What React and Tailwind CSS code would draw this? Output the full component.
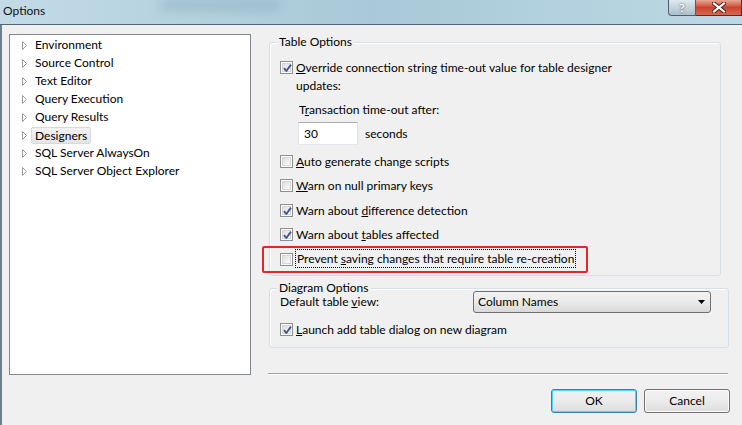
import React from "react";

function Check({ checked }) {
  return (
    <span className="relative w-[13px] h-[13px] shrink-0 border border-[#8e8f8f] bg-white flex items-center justify-center">
      <span className="w-[9px] h-[9px] border border-[#d6d6d6] bg-gradient-to-br from-[#dedede] to-[#fbfbfb]" />
      {checked && (
        <svg className="absolute left-[1px] top-[1px]" width="11" height="11" viewBox="0 0 11 11">
          <path d="M2 5.2 L4.3 8 L9 1.6" fill="none" stroke="#3e5495" strokeWidth="1.9" strokeLinejoin="round" />
        </svg>
      )}
    </span>
  );
}

function Arrow() {
  return (
    <svg width="6" height="9" viewBox="0 0 6 9" className="shrink-0">
      <path d="M0.5 0.5 L4.5 4.5 L0.5 8.5 Z" fill="#ffffff" stroke="#9a9a9a" strokeWidth="1" />
    </svg>
  );
}

function CheckRow({ checked, children, className = "" }) {
  return (
    <div className={"flex items-start h-[18px] " + className}>
      <span className="mt-[2px]">
        <Check checked={checked} />
      </span>
      <span className="ml-[3px] leading-[18px]">{children}</span>
    </div>
  );
}

const treeItems = [
  "Environment",
  "Source Control",
  "Text Editor",
  "Query Execution",
  "Query Results",
  "Designers",
  "SQL Server AlwaysOn",
  "SQL Server Object Explorer",
];

export default function App() {
  return (
    <div
      className="w-[742px] h-[425px] bg-[#f0f0f0] flex flex-col overflow-hidden text-[12px] text-black"
      style={{ fontFamily: "Lato, 'Noto Sans', sans-serif" }}
    >
      {/* Title bar */}
      <div className="relative h-[25px] shrink-0 border-b border-[#53667a] bg-gradient-to-r from-[#c2dbe7] via-[#a9c9d8] to-[#bcd8e4] flex items-start">
        <div className="absolute left-[160px] top-0 w-[120px] h-[10px] bg-[#8fb0c2] blur-[6px] opacity-70" />
        <span className="relative pl-[3px] pt-[3px] text-[12px] leading-[16px] text-[#111]">Options</span>
        <div className="ml-auto flex h-[16px]">
          <div className="w-[28px] h-[16px] border border-t-0 border-[#4d5e6e] rounded-bl-[4px] bg-gradient-to-b from-[#dfe9ef] to-[#a9bfcc] flex items-center justify-center text-white font-bold text-[12px] leading-none [text-shadow:0_0_2px_#333]">
            ?
          </div>
          <div className="w-[46px] h-[16px] border border-t-0 border-l-0 border-[#5a2a22] bg-gradient-to-b from-[#e8a595] via-[#c9452e] to-[#d8684f] flex items-center justify-center">
            <svg width="14" height="11" viewBox="0 0 14 11">
              <path d="M2 1.5 L12 9.5 M12 1.5 L2 9.5" stroke="#4a1a12" strokeWidth="4" strokeLinecap="square" />
              <path d="M2 1.5 L12 9.5 M12 1.5 L2 9.5" stroke="#ffffff" strokeWidth="2.2" strokeLinecap="square" />
            </svg>
          </div>
        </div>
      </div>

      {/* Body */}
      <div className="flex flex-1 border-l-2 border-[#6c7f8e]">
        {/* Tree */}
        <div className="ml-[7px] mt-[9px] w-[242px] h-[341px] border border-[#828790] bg-white pt-[1px]">
          {treeItems.map((t) => (
            <div key={t} className="flex items-center h-[18px] pl-[12px]">
              <Arrow />
              {t === "Designers" ? (
                <span className="ml-[3px] px-[3px] h-[17px] leading-[15px] border border-[#d9d9d9] rounded-[2px] bg-gradient-to-b from-[#f2f2f2] to-[#e5e5e5]">
                  {t}
                </span>
              ) : (
                <span className="ml-[7px] leading-[18px]">{t}</span>
              )}
            </div>
          ))}
        </div>

        {/* Right column */}
        <div className="ml-[17px] pt-[17px] flex flex-col">
          {/* Table Options */}
          <div className="relative ml-[1px] w-[452px] h-[234px] border border-[#d5dfe5] rounded-[3px] shadow-[inset_1px_1px_0_#ffffff] pl-[10px]">
            <span className="absolute left-[7px] top-[-9px] px-[2px] bg-[#f0f0f0] leading-[16px]">Table Options</span>
            <div className="flex items-start mt-[16px]">
              <span className="mt-[2px]">
                <Check checked />
              </span>
              <span className="ml-[3px] leading-[18px] w-[330px]">
                <u>O</u>verride connection string time-out value for table designer updates:
              </span>
            </div>
            <div className="ml-[19px] mt-[6px] leading-[18px]">
              T<u>r</u>ansaction time-out after:
            </div>
            <div className="ml-[18px] mt-[3px] flex items-center">
              <div className="w-[60px] h-[23px] border border-[#abadb3] border-l-[#e2e3ea] border-r-[#dbdfe6] border-b-[#e3e9ef] bg-white pl-[5px] leading-[21px]">
                30
              </div>
              <span className="ml-[7px]">seconds</span>
            </div>
            <CheckRow className="mt-[8px]">
              <u>A</u>uto generate change scripts
            </CheckRow>
            <CheckRow className="mt-[6px]">
              <u>W</u>arn on null primary keys
            </CheckRow>
            <CheckRow checked className="mt-[7px]">
              Warn about <u>d</u>ifference detection
            </CheckRow>
            <CheckRow checked className="mt-[6px]">
              Warn about <u>t</u>ables affected
            </CheckRow>
            <div className="relative flex items-start h-[18px] mt-[7px]">
              <div className="absolute left-[-18px] top-[-5px] w-[326px] h-[27px] border-2 border-[#e3262a] rounded-[2px]" />
              <span className="mt-[2px]">
                <Check />
              </span>
              <span className="ml-[2px] -mt-[2px] h-[19px] px-[1px] leading-[17px] border border-dotted border-black">
                Prevent <u>s</u>aving changes that require table re-creation
              </span>
            </div>
          </div>

          {/* Diagram Options */}
          <div className="relative ml-[1px] mt-[12px] w-[460px] h-[60px] border border-[#d5dfe5] rounded-[3px] shadow-[inset_1px_1px_0_#ffffff] pl-[10px]">
            <span className="absolute left-[7px] top-[-9px] px-[2px] bg-[#f0f0f0] leading-[16px]">Diagram Options</span>
            <div className="flex items-center mt-[2px] h-[22px]">
              <span className="leading-[18px]">
                Default table <u>v</u>iew:
              </span>
              <div className="ml-auto mr-[17px] w-[238px] h-[22px] border border-[#707070] rounded-[3px] bg-gradient-to-b from-[#f2f2f2] via-[#ebebeb] to-[#d9d9d9] flex items-center pl-[4px] pr-[5px]">
                <span>Column Names</span>
                <svg className="ml-auto" width="7" height="4" viewBox="0 0 7 4">
                  <path d="M0 0 L7 0 L3.5 4 Z" fill="#000" />
                </svg>
              </div>
            </div>
            <CheckRow checked className="mt-[8px]">
              <u>L</u>aunch add table dialog on new diagram
            </CheckRow>
          </div>

          {/* Separator */}
          <div className="mt-[25px] w-[460px] border-t border-[#a0a0a0] border-b border-b-white" />

          {/* Buttons */}
          <div className="mt-[14px] w-[462px] flex justify-end gap-[7px]">
            <div className="w-[86px] h-[24px] rounded-[3px] border border-[#3c7fb1] shadow-[inset_0_0_0_1px_#48d8fb] bg-gradient-to-b from-[#f2f2f2] via-[#ebebeb] to-[#dddddd] flex items-center justify-center">
              OK
            </div>
            <div className="w-[86px] h-[24px] rounded-[3px] border border-[#707070] shadow-[inset_0_0_0_1px_#fcfcfc] bg-gradient-to-b from-[#f2f2f2] via-[#ebebeb] to-[#dddddd] flex items-center justify-center">
              Cancel
            </div>
          </div>
        </div>
      </div>
    </div>
  );
}
